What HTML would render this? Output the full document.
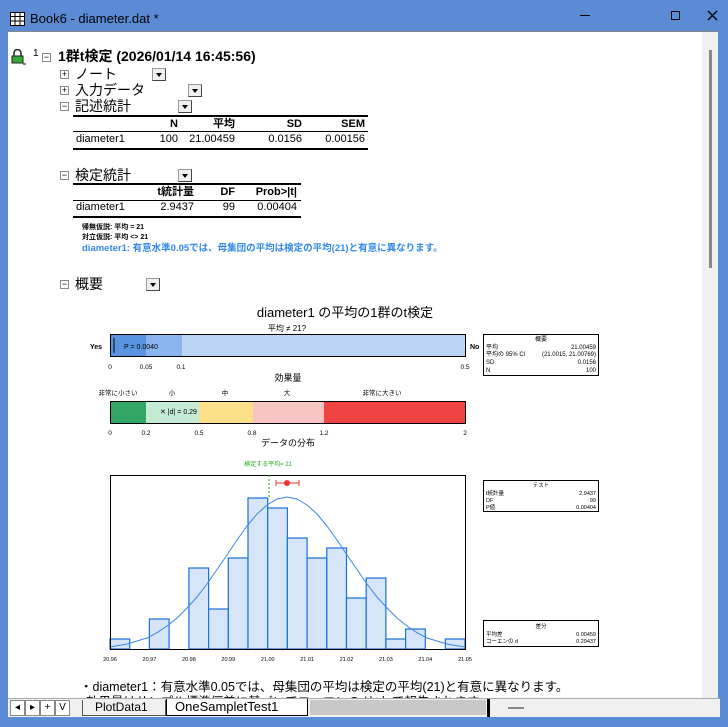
<!DOCTYPE html>
<html><head><meta charset="utf-8"><style>
*{margin:0;padding:0;box-sizing:border-box}
body{width:728px;height:727px;overflow:hidden;background:#5a8bd4;font-family:"Liberation Sans","Noto Sans CJK JP",sans-serif;position:relative;color:#000}
.a{position:absolute;white-space:nowrap}
.h{font-size:14px;line-height:16px}
.pm{position:absolute;width:9px;height:9px;border:1px solid #888;background:#fff;font-size:9px;line-height:7px;text-align:center;color:#000}
.dd{position:absolute;width:14px;height:13px;background:#f0f0f0;border:1px solid #999;border-right-color:#444;border-bottom-color:#444}
.dd:after{content:"";position:absolute;left:3px;top:4px;border-left:3.5px solid transparent;border-right:3.5px solid transparent;border-top:4px solid #000}
.t{font-size:11px;line-height:12px}
.r{text-align:right}
</style></head><body>
<svg class="a" style="left:10px;top:12px" width="15" height="14"><rect x="0.5" y="0.5" width="14" height="13" fill="#fff" stroke="#000"/><path d="M0 4.5H15M0 9H15M5 0V14M10 0V14" stroke="#000"/></svg>
<div class="a" style="left:30px;top:11px;font-size:13px;line-height:16px">Book6 - diameter.dat *</div>
<div class="a" style="left:580px;top:15px;width:10px;height:1px;background:#000"></div>
<div class="a" style="left:671px;top:11px;width:9px;height:9px;border:1px solid #000"></div>
<svg class="a" style="left:707px;top:10px" width="11" height="11"><path d="M1 1L10 10M10 1L1 10" stroke="#000" stroke-width="1.3"/></svg>
<div class="a" style="left:8px;top:31px;width:694px;height:667px;background:#fff;border-top:1px solid #888"></div>
<div class="a" style="left:702px;top:31px;width:16px;height:667px;background:#f0f0f0;border-top:1px solid #888"></div>
<div class="a" style="left:709px;top:50px;width:3px;height:218px;background:#888"></div>
<svg class="a" style="left:10px;top:49px" width="16" height="16"><path d="M4 7V4a3.5 3.5 0 0 1 7 0v3" fill="none" stroke="#222" stroke-width="1.5"/><rect x="2" y="7" width="11" height="7" fill="#3a3" stroke="#222"/><path d="M13 15h3" stroke="#000"/></svg>
<div class="a" style="left:33px;top:48px;font-size:10px">1</div>
<div class="pm" style="left:42px;top:53px">−</div>
<div class="a" style="left:58px;top:48px;font-size:14px;font-weight:bold;line-height:17px">1群t検定 (2026/01/14 16:45:56)</div>

<div class="pm" style="left:60px;top:70px">+</div><div class="a h" style="left:75px;top:66px">ノート</div><div class="dd" style="left:152px;top:68px"></div>
<div class="pm" style="left:60px;top:86px">+</div><div class="a h" style="left:75px;top:82px">入力データ</div><div class="dd" style="left:188px;top:84px"></div>
<div class="pm" style="left:60px;top:102px">−</div><div class="a h" style="left:75px;top:98px">記述統計</div><div class="dd" style="left:178px;top:100px"></div>

<div class="a" style="left:73px;top:115px;width:295px;height:2px;background:#000"></div>
<div class="a t r" style="left:140px;top:118px;width:38px;font-weight:bold">N</div>
<div class="a t r" style="left:185px;top:118px;width:50px;font-weight:bold">平均</div>
<div class="a t r" style="left:250px;top:118px;width:52px;font-weight:bold">SD</div>
<div class="a t r" style="left:310px;top:118px;width:55px;font-weight:bold">SEM</div>
<div class="a" style="left:73px;top:131px;width:295px;height:1px;background:#000"></div>
<div class="a t" style="left:76px;top:133px">diameter1</div>
<div class="a t r" style="left:140px;top:133px;width:38px">100</div>
<div class="a t r" style="left:185px;top:133px;width:50px">21.00459</div>
<div class="a t r" style="left:250px;top:133px;width:52px">0.0156</div>
<div class="a t r" style="left:310px;top:133px;width:55px">0.00156</div>
<div class="a" style="left:73px;top:148px;width:295px;height:2px;background:#000"></div>

<div class="pm" style="left:60px;top:171px">−</div><div class="a h" style="left:75px;top:167px">検定統計</div><div class="dd" style="left:178px;top:169px"></div>
<div class="a" style="left:73px;top:183px;width:228px;height:2px;background:#000"></div>
<div class="a t r" style="left:130px;top:186px;width:64px;font-weight:bold">t統計量</div>
<div class="a t r" style="left:200px;top:186px;width:35px;font-weight:bold">DF</div>
<div class="a t r" style="left:240px;top:186px;width:57px;font-weight:bold">Prob>|t|</div>
<div class="a" style="left:73px;top:200px;width:228px;height:1px;background:#000"></div>
<div class="a t" style="left:76px;top:201px">diameter1</div>
<div class="a t r" style="left:130px;top:201px;width:64px">2.9437</div>
<div class="a t r" style="left:200px;top:201px;width:35px">99</div>
<div class="a t r" style="left:240px;top:201px;width:57px">0.00404</div>
<div class="a" style="left:73px;top:216px;width:228px;height:2px;background:#000"></div>
<div class="a" style="left:82px;top:222px;font-size:7px;font-weight:bold">帰無仮説: 平均 = 21</div>
<div class="a" style="left:82px;top:232px;font-size:7px;font-weight:bold">対立仮説: 平均 &lt;&gt; 21</div>
<div class="a" style="left:82px;top:240px;font-size:9.5px;font-weight:bold;color:#3388ee">diameter1: 有意水準0.05では、母集団の平均は検定の平均(21)と有意に異なります。</div>

<div class="pm" style="left:60px;top:280px">−</div><div class="a h" style="left:75px;top:276px">概要</div><div class="dd" style="left:146px;top:278px"></div>

<svg class="a" style="left:0;top:0" width="702" height="698" font-family="Liberation Sans,Noto Sans CJK JP,sans-serif">
<text x="345" y="317" font-size="13" text-anchor="middle">diameter1 の平均の1群のt検定</text>
<text x="287" y="331" font-size="8" text-anchor="middle">平均 ≠ 21?</text>
<rect x="110" y="334" width="36" height="23" fill="#5a93e0"/><rect x="146" y="334" width="36" height="23" fill="#8ab4ee"/><rect x="182" y="334" width="283" height="23" fill="#bcd5f5"/>
<rect x="110.5" y="334.5" width="355" height="22" fill="none" stroke="#000"/>
<line x1="114" y1="338" x2="114" y2="353" stroke="#000" stroke-width="1"/>
<text x="124" y="349" font-size="7">P = 0.0040</text>
<text x="90" y="349" font-size="7" font-weight="bold">Yes</text><text x="470" y="349" font-size="7" font-weight="bold">No</text>
<g font-size="6.5" text-anchor="middle"><text x="110" y="369">0</text><text x="146" y="369">0.05</text><text x="181" y="369">0.1</text><text x="465" y="369">0.5</text></g>
<rect x="483.5" y="334.5" width="115" height="41" fill="#fff" stroke="#000"/>
<g font-size="6"><text x="541" y="341" text-anchor="middle">概要</text><text x="486" y="349">平均</text><text x="486" y="356">平均の 95% CI</text><text x="486" y="364">SD</text><text x="486" y="372">N</text>
<g text-anchor="end"><text x="596" y="349">21.00459</text><text x="596" y="356">(21.0015, 21.00769)</text><text x="596" y="364">0.0156</text><text x="596" y="372">100</text></g></g>
<text x="288" y="381" font-size="9" text-anchor="middle">効果量</text>
<g font-size="6.5" text-anchor="middle"><text x="118" y="395">非常に小さい</text><text x="172" y="395">小</text><text x="225" y="395">中</text><text x="287" y="395">大</text><text x="382" y="395">非常に大きい</text></g>
<rect x="110" y="401" width="36" height="22" fill="#33a866"/><rect x="146" y="401" width="53" height="22" fill="#c4ecd5"/><rect x="199" y="401" width="54" height="22" fill="#fde08a"/><rect x="253" y="401" width="71" height="22" fill="#f8c4c4"/><rect x="324" y="401" width="141" height="22" fill="#f04444"/>
<rect x="110.5" y="401.5" width="355" height="22" fill="none" stroke="#000"/>
<text x="160" y="414" font-size="7">✕ |d| = 0.29</text>
<g font-size="6.5" text-anchor="middle"><text x="110" y="435">0</text><text x="146" y="435">0.2</text><text x="199" y="435">0.5</text><text x="252" y="435">0.8</text><text x="324" y="435">1.2</text><text x="465" y="435">2</text></g>
<text x="288" y="446" font-size="9" text-anchor="middle">データの分布</text>
<text x="268" y="466" font-size="6" fill="#2a2" text-anchor="middle">検定する平均= 21</text>
<g fill="#d6e6f8" stroke="#1a6fdc" stroke-width="1.2">
<rect x="110" y="639" width="19.7" height="10"/>
<rect x="149.4" y="619" width="19.7" height="30"/>
<rect x="188.9" y="568" width="19.7" height="81"/>
<rect x="208.6" y="609" width="19.7" height="40"/>
<rect x="228.3" y="558" width="19.7" height="91"/>
<rect x="248" y="498" width="19.7" height="151"/>
<rect x="267.7" y="508" width="19.7" height="141"/>
<rect x="287.4" y="538" width="19.7" height="111"/>
<rect x="307.1" y="558" width="19.7" height="91"/>
<rect x="326.8" y="548" width="19.7" height="101"/>
<rect x="346.5" y="598" width="19.7" height="51"/>
<rect x="366.2" y="578" width="19.7" height="71"/>
<rect x="385.9" y="639" width="19.7" height="10"/>
<rect x="405.6" y="629" width="19.7" height="20"/>
<rect x="445.3" y="639" width="19.7" height="10"/>
</g>
<polyline fill="none" stroke="#3a86e8" stroke-width="1" points="110,647 117,645.7 127,644 137,641 147,638 157,632.7 167,626 177,618 187,608 197,597 207,584 217,569.5 227,555 237,540 247,526 257,514 267,505 277,499 287,497 297,499 307,505 317,514 327,526 337,540 347,555 357,569.5 367,584 377,597 387,608 397,618 407,626 417,632.7 427,638 437,641 447,644 457,645.7 465,647"/>
<rect x="110.5" y="475.5" width="355" height="174" fill="none" stroke="#000"/>
<line x1="269" y1="475" x2="269" y2="497" stroke="#2a2" stroke-dasharray="2,2"/>
<path d="M276 483H299M276 480V486M299 480V486" stroke="#e33"/><circle cx="287" cy="483" r="3" fill="#e33"/>
<g font-size="5.5" text-anchor="middle"><text x="110" y="661">20.96</text><text x="149.4" y="661">20.97</text><text x="188.9" y="661">20.98</text><text x="228.3" y="661">20.99</text><text x="267.7" y="661">21.00</text><text x="307.1" y="661">21.01</text><text x="346.5" y="661">21.02</text><text x="385.9" y="661">21.03</text><text x="425.3" y="661">21.04</text><text x="465" y="661">21.05</text></g>
<rect x="483.5" y="480.5" width="115" height="31" fill="#fff" stroke="#000"/>
<g font-size="5.5"><text x="541" y="487" text-anchor="middle">テスト</text><text x="486" y="495">t統計量</text><text x="486" y="502">DF</text><text x="486" y="509">P値</text>
<g text-anchor="end"><text x="596" y="495">2.9437</text><text x="596" y="502">99</text><text x="596" y="509">0.00404</text></g></g>
<rect x="483.5" y="620.5" width="115" height="26" fill="#fff" stroke="#000"/>
<g font-size="5.5"><text x="541" y="628" text-anchor="middle">差分</text><text x="486" y="636">平均差</text><text x="486" y="643">コーエンの d</text>
<g text-anchor="end"><text x="596" y="636">0.00459</text><text x="596" y="643">0.29437</text></g></g>
</svg>
<div class="a" style="left:80px;top:679px;font-size:12.5px;line-height:16px">・diameter1：有意水準0.05では、母集団の平均は検定の平均(21)と有意に異なります。</div>
<div class="a" style="left:86px;top:694px;font-size:12.5px;line-height:16px">効果量はサンプル標準偏差に基づいてコーエンのdとして報告されます。</div>
<div class="a" style="left:8px;top:698px;width:712px;height:19px;background:#f0f0f0;border-top:1px solid #aaa"></div>
<div class="a" style="left:10px;top:700px;width:70px;height:16px;font-size:10px;line-height:14px">
<span style="display:inline-block;width:15px;border:1px solid #888;text-align:center;background:#fff">◂</span><span style="display:inline-block;width:15px;border:1px solid #888;text-align:center;background:#fff">▸</span><span style="display:inline-block;width:15px;border:1px solid #888;text-align:center;background:#fff">+</span><span style="display:inline-block;width:15px;border:1px solid #888;text-align:center;background:#fff">V</span></div>
<div class="a" style="left:82px;top:700px;width:84px;height:16px;border:1px solid #555;border-top:none;background:#f0f0f0;font-size:12px;line-height:15px;padding-left:12px">PlotData1</div>
<div class="a" style="left:166px;top:699px;width:142px;height:17px;border:1px solid #000;border-top:none;background:#fff;font-size:13px;line-height:16px;padding-left:8px">OneSampletTest1</div>
<div class="a" style="left:310px;top:700px;width:176px;height:15px;background:#c8c8c8"></div>
<div class="a" style="left:487px;top:699px;width:3px;height:18px;background:#000"></div>
<div class="a" style="left:508px;top:707px;width:16px;height:2px;background:#888"></div>
</body></html>
